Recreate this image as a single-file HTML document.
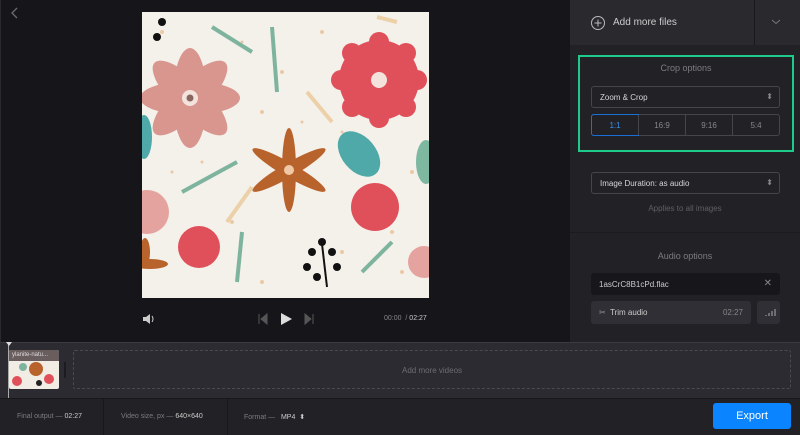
<!DOCTYPE html>
<html><head><style>
*{margin:0;padding:0;box-sizing:border-box}
body{width:800px;height:435px;overflow:hidden;background:#16151a;font-family:"Liberation Sans",sans-serif;position:relative;color:#ccc}
.a{position:absolute}
.t{font-size:8px;color:#7b7b80}
.sel{position:absolute;left:591px;width:189px;height:22px;border:1px solid #45454b;border-radius:3px;font-size:8px;color:#d6d6d9;padding:6px 0 0 8px}
.sel:after{content:"⬍";position:absolute;right:6px;top:5px;font-size:8px;color:#888}
</style></head><body>
<div class="a" style="left:0;top:0;width:570px;height:342px;background:#16151a;border-left:1px solid #2a2a2e"></div>
<svg class="a" style="left:10px;top:7px" width="10" height="12"><path d="M7 1 L2 6 L7 11" stroke="#6a6a70" stroke-width="1.3" fill="none"/></svg>

<svg class="a" style="left:142px;top:12px" width="287" height="286" viewBox="0 0 287 286">
<rect width="287" height="286" fill="#f4f0ea"/>
<g fill="#ecc9a6"><circle cx="20" cy="20" r="2"/><circle cx="100" cy="30" r="1.5"/><circle cx="180" cy="20" r="2"/><circle cx="120" cy="100" r="2"/><circle cx="90" cy="210" r="2"/><circle cx="260" cy="260" r="2"/><circle cx="30" cy="160" r="1.5"/><circle cx="200" cy="240" r="2"/><circle cx="160" cy="110" r="1.5"/><circle cx="270" cy="160" r="2"/><circle cx="120" cy="270" r="2"/><circle cx="60" cy="150" r="1.5"/><circle cx="140" cy="60" r="2"/><circle cx="200" cy="120" r="1.5"/><circle cx="250" cy="220" r="2"/></g>
<g fill="#d9968f" transform="translate(48,86)"><circle r="28"/><ellipse rx="17" ry="50"/><ellipse rx="17" ry="50" transform="rotate(45)"/><ellipse rx="17" ry="50" transform="rotate(90)"/><ellipse rx="17" ry="50" transform="rotate(135)"/></g>
<circle cx="48" cy="86" r="8" fill="#f4e3dd"/><circle cx="48" cy="86" r="3.5" fill="#8a6660"/>
<g fill="#e0505a" transform="translate(237,68)"><circle r="40"/><circle cx="0" cy="-38" r="10"/><circle cx="27" cy="-27" r="10"/><circle cx="38" cy="0" r="10"/><circle cx="27" cy="27" r="10"/><circle cx="0" cy="38" r="10"/><circle cx="-27" cy="27" r="10"/><circle cx="-38" cy="0" r="10"/><circle cx="-27" cy="-27" r="10"/></g>
<circle cx="237" cy="68" r="8" fill="#f4e3dd"/>
<g fill="#b8622c" transform="translate(147,158)"><ellipse rx="7" ry="42"/><ellipse rx="7" ry="42" transform="rotate(60)"/><ellipse rx="7" ry="42" transform="rotate(120)"/></g>
<circle cx="147" cy="158" r="5" fill="#f1c8a6"/>
<circle cx="233" cy="195" r="24" fill="#e0505a"/><circle cx="57" cy="235" r="21" fill="#e0505a"/>
<circle cx="5" cy="200" r="22" fill="#e5a3a0"/><circle cx="282" cy="250" r="16" fill="#e5a3a0"/>
<ellipse cx="217" cy="142" rx="17" ry="26" fill="#4fa9a8" transform="rotate(-40 217 142)"/>
<ellipse cx="2" cy="125" rx="8" ry="22" fill="#4fa9a8"/><ellipse cx="284" cy="150" rx="10" ry="22" fill="#7eb8a0"/>
<g stroke="#7eb49e" stroke-width="4" fill="none"><path d="M70 15 L110 40"/><path d="M130 15 L135 80"/><path d="M40 180 L95 150"/><path d="M95 270 L100 220"/><path d="M220 260 L250 230"/></g>
<g stroke="#ecd0a8" stroke-width="4"><path d="M165 80 L190 110"/><path d="M85 210 L110 175"/><path d="M235 5 L255 10"/></g>
<g fill="#111"><circle cx="180" cy="230" r="4"/><circle cx="170" cy="240" r="4"/><circle cx="190" cy="240" r="4"/><circle cx="165" cy="255" r="4"/><circle cx="195" cy="255" r="4"/><circle cx="175" cy="265" r="4"/><circle cx="20" cy="10" r="4"/><circle cx="15" cy="25" r="4"/></g>
<path d="M180 232 L185 275" stroke="#111" stroke-width="2"/>
<g fill="#b8622c"><ellipse cx="8" cy="252" rx="18" ry="5"/><ellipse cx="3" cy="240" rx="5" ry="14"/></g>
</svg>

<svg class="a" style="left:141px;top:312px" width="14" height="14"><path d="M2 5h3l4-3v10l-4-3H2z" fill="#ccc"/><path d="M11 4q2 3 0 6" stroke="#ccc" fill="none"/></svg>
<svg class="a" style="left:256px;top:312px" width="62" height="14"><path d="M3 2v10M11 2L5 7l6 5z" fill="#555" stroke="#555"/><path d="M25 1l11 6-11 6z" fill="#ddd"/><path d="M49 2l6 5-6 5zM57 2v10" fill="#555" stroke="#555"/></svg>
<div class="a" style="left:384px;top:315px;font-size:7px;color:#888">00:00 &nbsp;/ <span style="color:#ccc">02:27</span></div>

<div class="a" style="left:570px;top:0;width:230px;height:342px;background:#222226"></div>
<div class="a" style="left:570px;top:0;width:230px;height:45px;background:#2a2a2e"></div>
<div class="a" style="left:754px;top:0;width:1px;height:45px;background:#1a1a1e"></div>
<svg class="a" style="left:590px;top:15px" width="16" height="16"><circle cx="8" cy="8" r="6.5" stroke="#bbb" fill="none"/><path d="M8 4.5v7M4.5 8h7" stroke="#bbb"/></svg>
<div class="a" style="left:613px;top:17px;font-size:10px;color:#ccc">Add more files</div>
<svg class="a" style="left:771px;top:19px" width="10" height="6"><path d="M1 1l4 3.5L9 1" stroke="#777" fill="none"/></svg>
<div class="a" style="left:578px;top:55px;width:216px;height:97px;border:2px solid #1ecb8a"></div>
<div class="a t" style="left:578px;top:63px;width:216px;text-align:center;font-size:9px">Crop options</div>
<div class="sel" style="top:86px">Zoom &amp; Crop</div>
<div class="a" style="left:591px;top:114px;width:189px;height:22px;border:1px solid #45454b;border-radius:3px;display:flex;font-size:8px;color:#888">
<div style="flex:1;border:1px solid #1a6fd6;border-radius:3px 0 0 3px;color:#3d8ff0;text-align:center;padding-top:6px;margin:-1px">1:1</div>
<div style="flex:1;border-left:1px solid #45454b;text-align:center;padding-top:6px">16:9</div>
<div style="flex:1;border-left:1px solid #45454b;text-align:center;padding-top:6px">9:16</div>
<div style="flex:1;border-left:1px solid #45454b;text-align:center;padding-top:6px">5:4</div></div>
<div class="sel" style="top:172px">Image Duration: as audio</div>
<div class="a t" style="left:570px;top:204px;width:230px;text-align:center;color:#5f5f64">Applies to all images</div>
<div class="a" style="left:570px;top:232px;width:230px;height:1px;background:#1b1b1f"></div>
<div class="a t" style="left:570px;top:251px;width:230px;text-align:center;font-size:9px">Audio options</div>
<div class="a" style="left:591px;top:273px;width:189px;height:22px;background:#17161b;border-radius:3px;font-size:8px;color:#ccc;padding:7px 8px">1asCrC8B1cPd.flac<span style="position:absolute;right:8px;top:5px;color:#888;font-size:10px">✕</span></div>
<div class="a" style="left:591px;top:301px;width:160px;height:23px;background:#2f2f35;border-radius:3px;font-size:8px;color:#ccc;padding:7px 8px"><span style="color:#999">✂</span>&nbsp; Trim audio<span style="position:absolute;right:8px;top:7px;color:#888">02:27</span></div>
<div class="a" style="left:757px;top:301px;width:23px;height:23px;background:#2f2f35;border-radius:3px"></div>
<svg class="a" style="left:762px;top:308px" width="14" height="9"><path d="M1 8v0M4 7v1M7 5v3M10 3v5M13 1v7" stroke="#999" stroke-width="1.2"/></svg>

<div class="a" style="left:0;top:342px;width:800px;height:56px;background:#2c2b31;border-top:1px solid #3a3a40"></div>
<div class="a" style="left:8px;top:342px;width:1px;height:56px;background:#aaa"></div>
<div class="a" style="left:6px;top:342px;border:3px solid transparent;border-top:4px solid #ddd"></div>
<div class="a" style="left:9px;top:350px;width:50px;height:39px;background:#f1ece4;overflow:hidden;border-radius:2px">
<div style="background:#6a5d5e;height:11px;font-size:6px;color:#ddd;padding:2px 3px">ylanite-natu...</div>
<svg width="50" height="28"><circle cx="27" cy="8" r="7" fill="#b8622c"/><circle cx="8" cy="20" r="5" fill="#e0505a"/><circle cx="40" cy="18" r="5" fill="#e0505a"/><circle cx="14" cy="6" r="4" fill="#7eb49e"/><circle cx="30" cy="22" r="3" fill="#222"/></svg></div>
<div class="a" style="left:64px;top:362px;width:2px;height:16px;background:#1c1c20"></div>
<div class="a" style="left:73px;top:350px;width:718px;height:39px;border:1px dashed #4a4a50;border-radius:2px;font-size:8px;color:#6c6c72;text-align:center;padding-top:15px">Add more videos</div>

<div class="a" style="left:0;top:398px;width:800px;height:37px;background:#222226;border-top:1px solid #18181b"></div>
<div class="a" style="left:103px;top:399px;width:1px;height:36px;background:#18181b"></div>
<div class="a" style="left:227px;top:399px;width:1px;height:36px;background:#18181b"></div>
<div class="a t" style="left:17px;top:413px;font-size:7px">Final output — <span style="color:#ccc">02:27</span></div>
<div class="a t" style="left:121px;top:413px;font-size:7px">Video size, px — <span style="color:#ccc">640×640</span></div>
<div class="a t" style="left:244px;top:413px;font-size:7px">Format — &nbsp;&nbsp;<span style="color:#ccc">MP4 &nbsp;⬍</span></div>
<div class="a" style="left:713px;top:403px;width:78px;height:26px;background:#0a84ff;border-radius:3px;color:#fff;font-size:11px;text-align:center;padding-top:7px">Export</div>
</body></html>
